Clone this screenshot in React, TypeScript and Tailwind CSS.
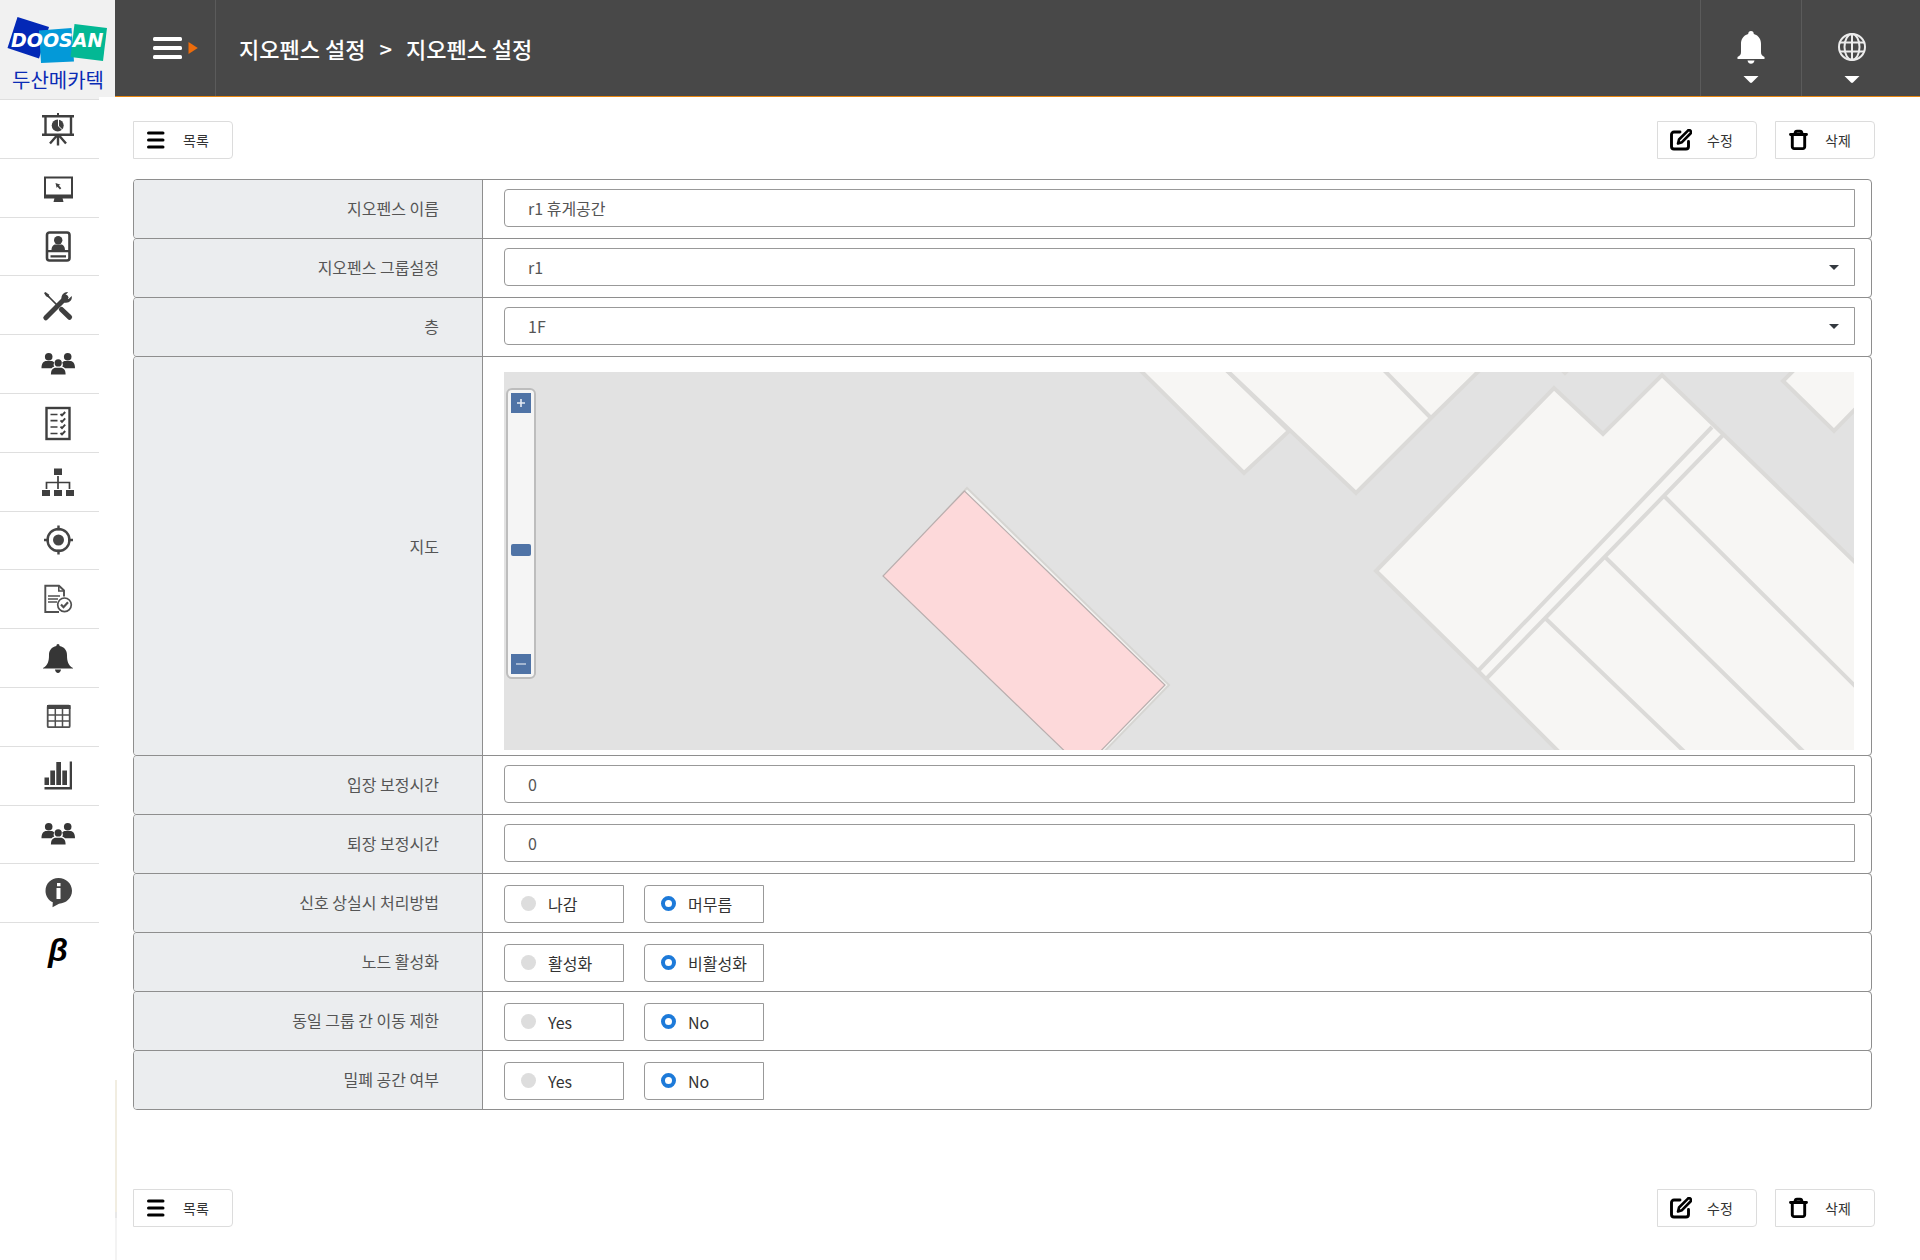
import type { ReactNode } from "react";

function Icon({ children, color = "#3f3f3f" }: { children: ReactNode; color?: string }) {
    return (
        <svg width="36" height="36" viewBox="0 0 36 36" fill={color} stroke="none" aria-hidden="true">
            {children}
        </svg>
    );
}

const PresentationIcon = () => (
    <Icon>
        <path d="M17 2h2v3h-2zM2 4h32v2.500H2zM2 22.500h32V25H2z" />
        <path d="M5.500 5v19M31 5v19M18 25v9.500M16.500 25l-6.500 7.500M19.500 25l6.500 7.500" stroke="#3f3f3f" strokeWidth="2.400" fill="none" />
        <circle cx="17.700" cy="14.500" r="6" />
        <path d="M18.500 8v7l4 4" stroke="#ffffff" fill="none" />
    </Icon>
);

const MonitorIcon = () => (
    <Icon>
        <path fillRule="evenodd" d="M4 6.500h29v22H4zM6 8.500v16h25v-16z" />
        <path d="M14.500 28h8l1 4h-10z" />
        <path d="M15.500 13l5 1.700-1.600.9 2.400 2.600-1.400 1.200-2.400-2.600-.8 1.300z" />
    </Icon>
);

const ProfileIcon = () => (
    <Icon>
        <rect x="7" y="4.500" width="22.500" height="28" rx="2.500" fill="none" stroke="#3f3f3f" strokeWidth="2.600" />
        <circle cx="18.200" cy="12.200" r="4.200" />
        <path d="M11.500 22.500c0-3.500 1.500-6 4-6h5.500c2.500 0 4 2.500 4 6zM7 22h22v2.300H7zM10.500 27.200h15.500v2.400H10.500z" />
    </Icon>
);

const ToolsIcon = () => (
    <Icon>
        <path d="M5.800 30.800L26 10.500" stroke="#3f3f3f" strokeWidth="5" strokeLinecap="round" />
        <path d="M21.500 12c-.5-4 2.500-7 6-7l.5.300-3 3.200.6 3 3 .6 3.100-3c1 4-2.700 7.600-7.200 6.600z" />
        <path d="M5.500 6.500l11 11" stroke="#3f3f3f" strokeWidth="1.700" />
        <path d="M4 6l1.500-1 3 2.300 1 2.500-1 .7-2.500-1.200z" />
        <path d="M21.500 22.500l8 7.700" stroke="#3f3f3f" strokeWidth="5.200" strokeLinecap="round" />
    </Icon>
);

const UsersIcon = () => (
    <Icon color="#363636">
        <circle cx="8.700" cy="10.700" r="3.800" />
        <circle cx="27.700" cy="10.700" r="3.800" />
        <path d="M1.500 22.300c0-5 2-7.300 5-7.300h4.500c1.500 0 2.700.7 3.300 1.700-1 1.500-.8 3 0 3.800-1.300.4-2.200 1-2.800 1.800zM35 22.300c0-5-2-7.300-5-7.300h-4.500c-1.500 0-2.700.7-3.300 1.700 1 1.500.8 3 0 3.800 1.300.4 2.200 1 2.800 1.800z" />
        <circle cx="18.200" cy="16.900" r="3.600" />
        <path d="M10.900 28.500c0-4.700 2-6.800 5-6.800h4.700c3 0 5 2.100 5 6.800z" />
    </Icon>
);

const ChecklistIcon = () => (
    <Icon>
        <g fill="none" stroke="#3f3f3f">
            <rect x="6.500" y="3" width="23" height="31" strokeWidth="2.400" />
            <path d="M10.500 9.500h7M10.500 15.700h7M10.500 22h7M10.500 28.500h7" strokeWidth="1.700" />
            <path d="M20.500 9l1.500 1.500 3.200-3.500M20.500 15.300l1.500 1.500 3.200-3.500M20.500 21.600l1.500 1.500 3.200-3.500M20.500 28l1.500 1.500 3.200-3.500" strokeWidth="1.900" />
        </g>
    </Icon>
);

const SitemapIcon = () => (
    <Icon>
        <path d="M14 4.500h8V11h-8zM2 26h8v6H2zM14 26h8v6h-8zM26 26h8v6h-8z" />
        <path d="M18 12v13M6.500 25v-6.500h23V25" fill="none" stroke="#3f3f3f" strokeWidth="1.700" />
    </Icon>
);

const TargetIcon = () => (
    <Icon color="#454545">
        <circle cx="18.500" cy="18" r="11" fill="none" stroke="#454545" strokeWidth="2.400" />
        <circle cx="18.500" cy="18" r="5.500" />
        <path d="M17.300 3.500h2.400v5h-2.400zM17.300 27.500h2.400v5h-2.400zM4 16.800h5v2.400H4zM28 16.800h5v2.400h-5z" />
    </Icon>
);

const ReportIcon = () => (
    <Icon>
        <g fill="none" stroke="#505050">
            <path d="M24 15.500V9.500L19 4.800H5.300V31H19" strokeWidth="1.900" />
            <path d="M18.800 5v5H24M8 15h12M8 18h10M8 21h9" strokeWidth="1.600" />
            <circle cx="24.500" cy="23.800" r="6.800" fill="#ffffff" strokeWidth="1.700" />
            <path d="M21 23.500l2.500 2.700 4.500-5" strokeWidth="2.200" />
        </g>
    </Icon>
);

const BellIcon = () => (
    <Icon color="#363636">
        <path d="M18 4c1 0 1.600.8 1.600 2C24.500 7 27 10.500 27 15c0 6 1 10.500 6 13v.6H3V28c5-2.500 6-7 6-13 0-4.500 2.500-8 7.400-9 0-1.200.6-2 1.600-2zM15 29.500h6c-.3 2.300-1.500 3.500-3 3.500s-2.700-1.200-3-3.500z" />
    </Icon>
);

const TableIcon = () => (
    <Icon color="#454545">
        <rect x="7.700" y="6.700" width="22" height="21.500" rx="1" fill="none" stroke="#505050" strokeWidth="1.800" />
        <path d="M7 6h23.500v4H7z" />
        <path d="M15.300 10v18M22.500 10v18M8 16h22M8 22h22" fill="none" stroke="#505050" strokeWidth="1.500" />
    </Icon>
);

const ChartIcon = () => (
    <Icon>
        <path d="M4.500 19.500H9V27H4.500zM10.300 12.500H15V27h-4.700zM16.300 4H21v23h-4.700zM22.300 12.500H27V27h-4.700zM29.700 3.500H32V31.500H4.500v-2.400h25.200z" />
    </Icon>
);

const InfoIcon = () => (
    <Icon color="#444444">
        <path d="M18.500 3C26 3 32 8.500 32 15.800s-6 12.700-13 12.900l-6.500 3.500.3-5C8.500 25.500 5.500 21 5.500 16 5.500 8.500 11 3 18.500 3z" />
        <path d="M17 8h3.500v3.200H17zM16.500 13h4v11h-4z" fill="#ffffff" />
    </Icon>
);

const BetaIcon = () => (
    <span className="w-9 pb-1 text-center font-['Liberation_Sans'] text-[32px] leading-9 font-bold text-black italic">β</span>
);

const menuItems = [
    { label: "대시보드", icon: PresentationIcon },
    { label: "모니터링", icon: MonitorIcon },
    { label: "사용자", icon: ProfileIcon },
    { label: "장비", icon: ToolsIcon },
    { label: "그룹", icon: UsersIcon },
    { label: "점검표", icon: ChecklistIcon },
    { label: "조직", icon: SitemapIcon },
    { label: "지오펜스", icon: TargetIcon },
    { label: "보고서", icon: ReportIcon },
    { label: "알림", icon: BellIcon },
    { label: "이력", icon: TableIcon },
    { label: "통계", icon: ChartIcon },
    { label: "방문자", icon: UsersIcon },
    { label: "정보", icon: InfoIcon },
    { label: "베타", icon: BetaIcon },
];

function Logo() {
    return (
        <svg width="115" height="97" viewBox="0 0 115 97" role="img" aria-label="DOOSAN 두산메카텍">
            <path d="M17.500 17L49 27 39 58.500 7.500 48z" fill="#0328b6" />
            <path d="M39 30.500l32.500-2.500 2.500 33.500-33 1.500z" fill="#0399d8" />
            <path d="M74.500 24l32.500 4-4 33-32.500-4z" fill="#03b894" />
            <text x="11" y="47" fill="#ffffff" fontFamily="DejaVu Sans" fontSize="19" fontWeight="700" fontStyle="italic">DOOSAN</text>
            <text x="12" y="88" fill="#0a2bb5" fontFamily="Noto Sans CJK KR" fontSize="20">두산메카텍</text>
        </svg>
    );
}

function Sidebar() {
    return (
        <aside className="w-[115px] shrink-0">
            <a href="#" className="block h-[97px] bg-[#f1f1f1]">
                <Logo />
            </a>
            <div className="h-0.5 w-[99px] bg-[#f1f1f1]" />
            <nav>
                <ul className="flex h-[882px] w-[99px] flex-col">
                    {menuItems.map(({ label, icon: MenuIcon }) => (
                        <li key={label} className="flex-1 border-t border-[#dfdfdf]">
                            <a href="#" aria-label={label} className="flex h-full items-center justify-center pl-[17px]">
                                <MenuIcon />
                            </a>
                        </li>
                    ))}
                </ul>
            </nav>
        </aside>
    );
}

const Caret = () => (
    <svg width="16" height="8" viewBox="0 0 16 8" aria-hidden="true">
        <path d="M0.500 0h15L9 6.500q-1 .8-2 0z" fill="#ffffff" />
    </svg>
);

function Header() {
    return (
        <header className="flex h-[97px] border-b border-[#e8860f] bg-[#484848] pr-[18px] text-white">
            <button type="button" aria-label="메뉴" className="flex w-[101px] items-center justify-center gap-[5px] border-r border-[#5b5b5b] pl-5">
                <svg width="30" height="22" viewBox="0 0 30 22" fill="#ffffff">
                    <rect y="0" width="29" height="4" rx="1.500" />
                    <rect y="9" width="29" height="4" rx="1.500" />
                    <rect y="18" width="29" height="4" rx="1.500" />
                </svg>
                <svg width="10" height="12" viewBox="0 0 10 12">
                    <path d="M0.500 0v12L9.800 6z" fill="#ec6c0c" />
                </svg>
            </button>
            <h1 className="flex flex-1 items-center gap-[14px] pl-[23px] text-[22px] font-medium">
                <span>지오펜스 설정</span>
                <span>&gt;</span>
                <span>지오펜스 설정</span>
            </h1>
            <button type="button" aria-label="알림" className="flex w-[101px] flex-col items-center gap-3 border-l border-[#5b5b5b] pt-[31px]">
                <svg width="28" height="33" viewBox="0 0 28 33" fill="#ffffff">
                    <path d="M14 0c1.700 0 2.800 1.200 2.800 3C22 4.500 24 8.500 24 13v8c0 2.500 1 3.500 3.500 5v2h-27v-2C3 24.500 4 23.500 4 21v-8c0-4.500 2-8.500 7.200-10 0-1.800 1.100-3 2.800-3zM10.500 29.500h7c-.3 2-1.800 3.300-3.500 3.300s-3.200-1.300-3.500-3.300z" />
                </svg>
                <Caret />
            </button>
            <button type="button" aria-label="언어" className="flex w-[101px] flex-col items-center gap-3 border-l border-[#5b5b5b] pt-[31px]">
                <svg width="30" height="33" viewBox="0 0 30 33" fill="none" stroke="#ececec" strokeWidth="2">
                    <circle cx="15" cy="16" r="13" />
                    <ellipse cx="15" cy="16" rx="7.500" ry="13" />
                    <path d="M15 3v26M3 11.500h24M3 20.500h24" />
                </svg>
                <Caret />
            </button>
        </header>
    );
}

const ListIcon = () => (
    <svg width="22" height="22" viewBox="0 0 22 22">
        <path d="M2.500 4h14.500M2.500 11h14.500M2.500 18h14.500" stroke="#000000" strokeWidth="3" strokeLinecap="round" />
    </svg>
);

const EditIcon = () => (
    <svg width="22" height="22" viewBox="0 0 22 22" fill="none" stroke="#000000" strokeWidth="2.900" strokeLinecap="round" strokeLinejoin="round">
        <path d="M10 3H4A2.500 2.500 0 0 0 1.500 5.500v12A2.500 2.500 0 0 0 4 20h12a2.500 2.500 0 0 0 2.500-2.500v-5" />
        <path d="M8 14.500l1-4 8.700-8.700c1.800-1.800 4.500.9 2.800 2.700L12 13.200z" strokeWidth="2.600" />
    </svg>
);

const TrashIcon = () => (
    <svg width="22" height="22" viewBox="0 0 22 22" fill="none" stroke="#000000" strokeWidth="2.900" strokeLinecap="round" strokeLinejoin="round">
        <path d="M2.500 5.500h16M4.300 6v11.800a1.800 1.800 0 0 0 1.800 1.800h8.800a1.800 1.800 0 0 0 1.800-1.800V6M7 5c0-2 .8-2.800 2-2.800h3c1.200 0 2 .8 2 2.800" />
    </svg>
);

function ActionButton({ label, icon }: { label: string; icon: ReactNode }) {
    return (
        <button type="button" className="flex h-[38px] w-[100px] items-center rounded-r border border-[#dcdcdc] bg-white pr-2 pl-3 text-sm text-[#333333]">
            {icon}
            <span className="flex-1 text-center">{label}</span>
        </button>
    );
}

function Toolbar() {
    return (
        <div className="flex gap-[18px]">
            <div className="flex-1">
                <ActionButton label="목록" icon={<ListIcon />} />
            </div>
            <ActionButton label="수정" icon={<EditIcon />} />
            <ActionButton label="삭제" icon={<TrashIcon />} />
        </div>
    );
}

const rowClass = "-mt-px flex overflow-hidden rounded border border-[#8e8e8e]";
const labelClass = "flex w-[349px] shrink-0 items-center justify-end border-r border-[#8e8e8e] bg-[#ebedef] pr-[43px]";
const fieldClass = "h-[38px] w-full appearance-none rounded-l border border-[#999999] bg-white px-[23px] text-[#555555]";

function TextRow({ id, label, value }: { id: string; label: string; value: string }) {
    return (
        <div className={rowClass}>
            <label htmlFor={id} className={`${labelClass} pb-0.5`}>{label}</label>
            <div className="h-[58px] flex-1 pt-[9px] pr-4 pl-[21px]">
                <input id={id} type="text" defaultValue={value} className={fieldClass} />
            </div>
        </div>
    );
}

function SelectRow({ id, label, value }: { id: string; label: string; value: string }) {
    return (
        <div className={rowClass}>
            <label htmlFor={id} className={`${labelClass} pb-0.5`}>{label}</label>
            <div className="h-[58px] flex-1 pt-[9px] pr-4 pl-[21px]">
                <div className="relative">
                    <select id={id} defaultValue={value} className={fieldClass}>
                        <option>{value}</option>
                    </select>
                    <svg width="10" height="5" viewBox="0 0 10 5" className="pointer-events-none absolute top-[17px] right-4">
                        <path d="M0 0h10L5 5z" fill="#343a40" />
                    </svg>
                </div>
            </div>
        </div>
    );
}

function RadioRow({ name, label, options }: { name: string; label: string; options: string[] }) {
    return (
        <div className={rowClass} role="radiogroup" aria-labelledby={name}>
            <div id={name} className={`${labelClass} pb-0.5`}>{label}</div>
            <div className="flex h-[58px] flex-1 gap-5 pt-[11px] pl-[21px]">
                {options.map((option, i) => (
                    <label key={option} className="flex h-[38px] w-[120px] items-center gap-3 rounded-l border border-[#999999] pb-px pl-4 text-[#333333]">
                        <input
                            type="radio"
                            name={name}
                            defaultChecked={i === 1}
                            className="size-[15px] appearance-none rounded-full bg-[#dddddd] checked:border-4 checked:border-[#1d7ad9] checked:bg-white"
                        />
                        {option}
                    </label>
                ))}
            </div>
        </div>
    );
}

// Floor plan around the selected fence
function FloorMap() {
    return (
        <div className="relative h-[378px] overflow-hidden bg-[#e2e2e2]">
            <svg className="h-full w-full" viewBox="0 0 1350 378" preserveAspectRatio="xMidYMid slice" role="img" aria-label="지도">
                <g fill="#f7f6f4" stroke="#dbdad8" strokeWidth="4">
                    <path d="M628-10L740 101l45-42L714-10z" />
                    <path d="M714-10L852 121l75-75 57-56z" />
                    <path d="M872-10l55 56" />
                    <path d="M1050-10l11 11 11-11z" />
                    <path d="M1298-10l-19 19 51 50 30-31V-10z" />
                    <path d="M872 199L1050 16l49 46 59-59 61 59 141 137v189H1063L974 299z" />
                    <path d="M974 299l234-244M982 307l238-245M1160 124l200 199M1101 185l207 203M1041 246l148 142" />
                </g>
                <path d="M463 116L665 313l-75 77H580L381 204z" fill="#f3f2f0" stroke="#d6d5d2" strokeWidth="2" />
                <path d="M460.500 119L379 204l193 186h14l75-77z" fill="#fdd9da" stroke="#b9aeae" strokeWidth="1.200" />
            </svg>
            <div className="absolute top-4 left-0.5 flex h-[291px] w-[30px] flex-col items-center rounded-md border-2 border-[#bdbdbd] bg-[#f5f5f5] py-[3px]">
                <button type="button" aria-label="확대" className="flex size-5 items-center justify-center bg-[#4f73a6]">
                    <svg width="8" height="8" viewBox="0 0 8 8"><path d="M4 0v8M0 4h8" stroke="#e6ecf4" strokeWidth="1.600" /></svg>
                </button>
                <input
                    type="range"
                    aria-label="확대 수준"
                    defaultValue={43}
                    className="min-h-0 w-5 flex-1 appearance-none bg-transparent [direction:rtl] [writing-mode:vertical-lr] [&::-webkit-slider-thumb]:h-3 [&::-webkit-slider-thumb]:w-5 [&::-webkit-slider-thumb]:appearance-none [&::-webkit-slider-thumb]:rounded-xs [&::-webkit-slider-thumb]:bg-[#4f73a6]"
                />
                <button type="button" aria-label="축소" className="flex size-5 items-center justify-center bg-[#4f73a6]">
                    <svg width="10" height="2" viewBox="0 0 10 2"><path d="M0 1h10" stroke="#b8c7dc" strokeWidth="1.600" /></svg>
                </button>
            </div>
        </div>
    );
}

export default function App() {
    return (
        <div className="flex min-h-screen bg-white font-['Noto_Sans_CJK_KR',sans-serif] text-base text-[#555555]">
            <Sidebar />
            <div className="flex min-w-0 flex-1 flex-col">
                <Header />
                <div className="flex flex-1">
                    <div className="flex w-0.5 flex-col pt-[983px]">
                        <div className="h-[132px] bg-[#f1ede1]" />
                        <div className="h-1.5 bg-[#e8e8e8]" />
                        <div className="flex-1 bg-[#f3f3f3]" />
                    </div>
                    <main className="min-w-0 flex-1 pt-6 pr-[45px] pb-8 pl-4">
                        <Toolbar />
                        <form className="mt-[21px] mr-[3px] mb-[79px]">
                            <TextRow id="fence-name" label="지오펜스 이름" value="r1 휴게공간" />
                            <SelectRow id="fence-group" label="지오펜스 그룹설정" value="r1" />
                            <SelectRow id="floor" label="층" value="1F" />
                            <div className={rowClass}>
                                <div className={`${labelClass} pb-5`}>지도</div>
                                <div className="min-w-0 flex-1 pt-[15px] pr-[17px] pb-[5px] pl-[21px]">
                                    <FloorMap />
                                </div>
                            </div>
                            <TextRow id="enter-offset" label="입장 보정시간" value="0" />
                            <TextRow id="exit-offset" label="퇴장 보정시간" value="0" />
                            <RadioRow name="signal-loss" label="신호 상실시 처리방법" options={["나감", "머무름"]} />
                            <RadioRow name="node-active" label="노드 활성화" options={["활성화", "비활성화"]} />
                            <RadioRow name="group-move" label="동일 그룹 간 이동 제한" options={["Yes", "No"]} />
                            <RadioRow name="closed-space" label="밀폐 공간 여부" options={["Yes", "No"]} />
                        </form>
                        <Toolbar />
                    </main>
                </div>
            </div>
        </div>
    );
}
